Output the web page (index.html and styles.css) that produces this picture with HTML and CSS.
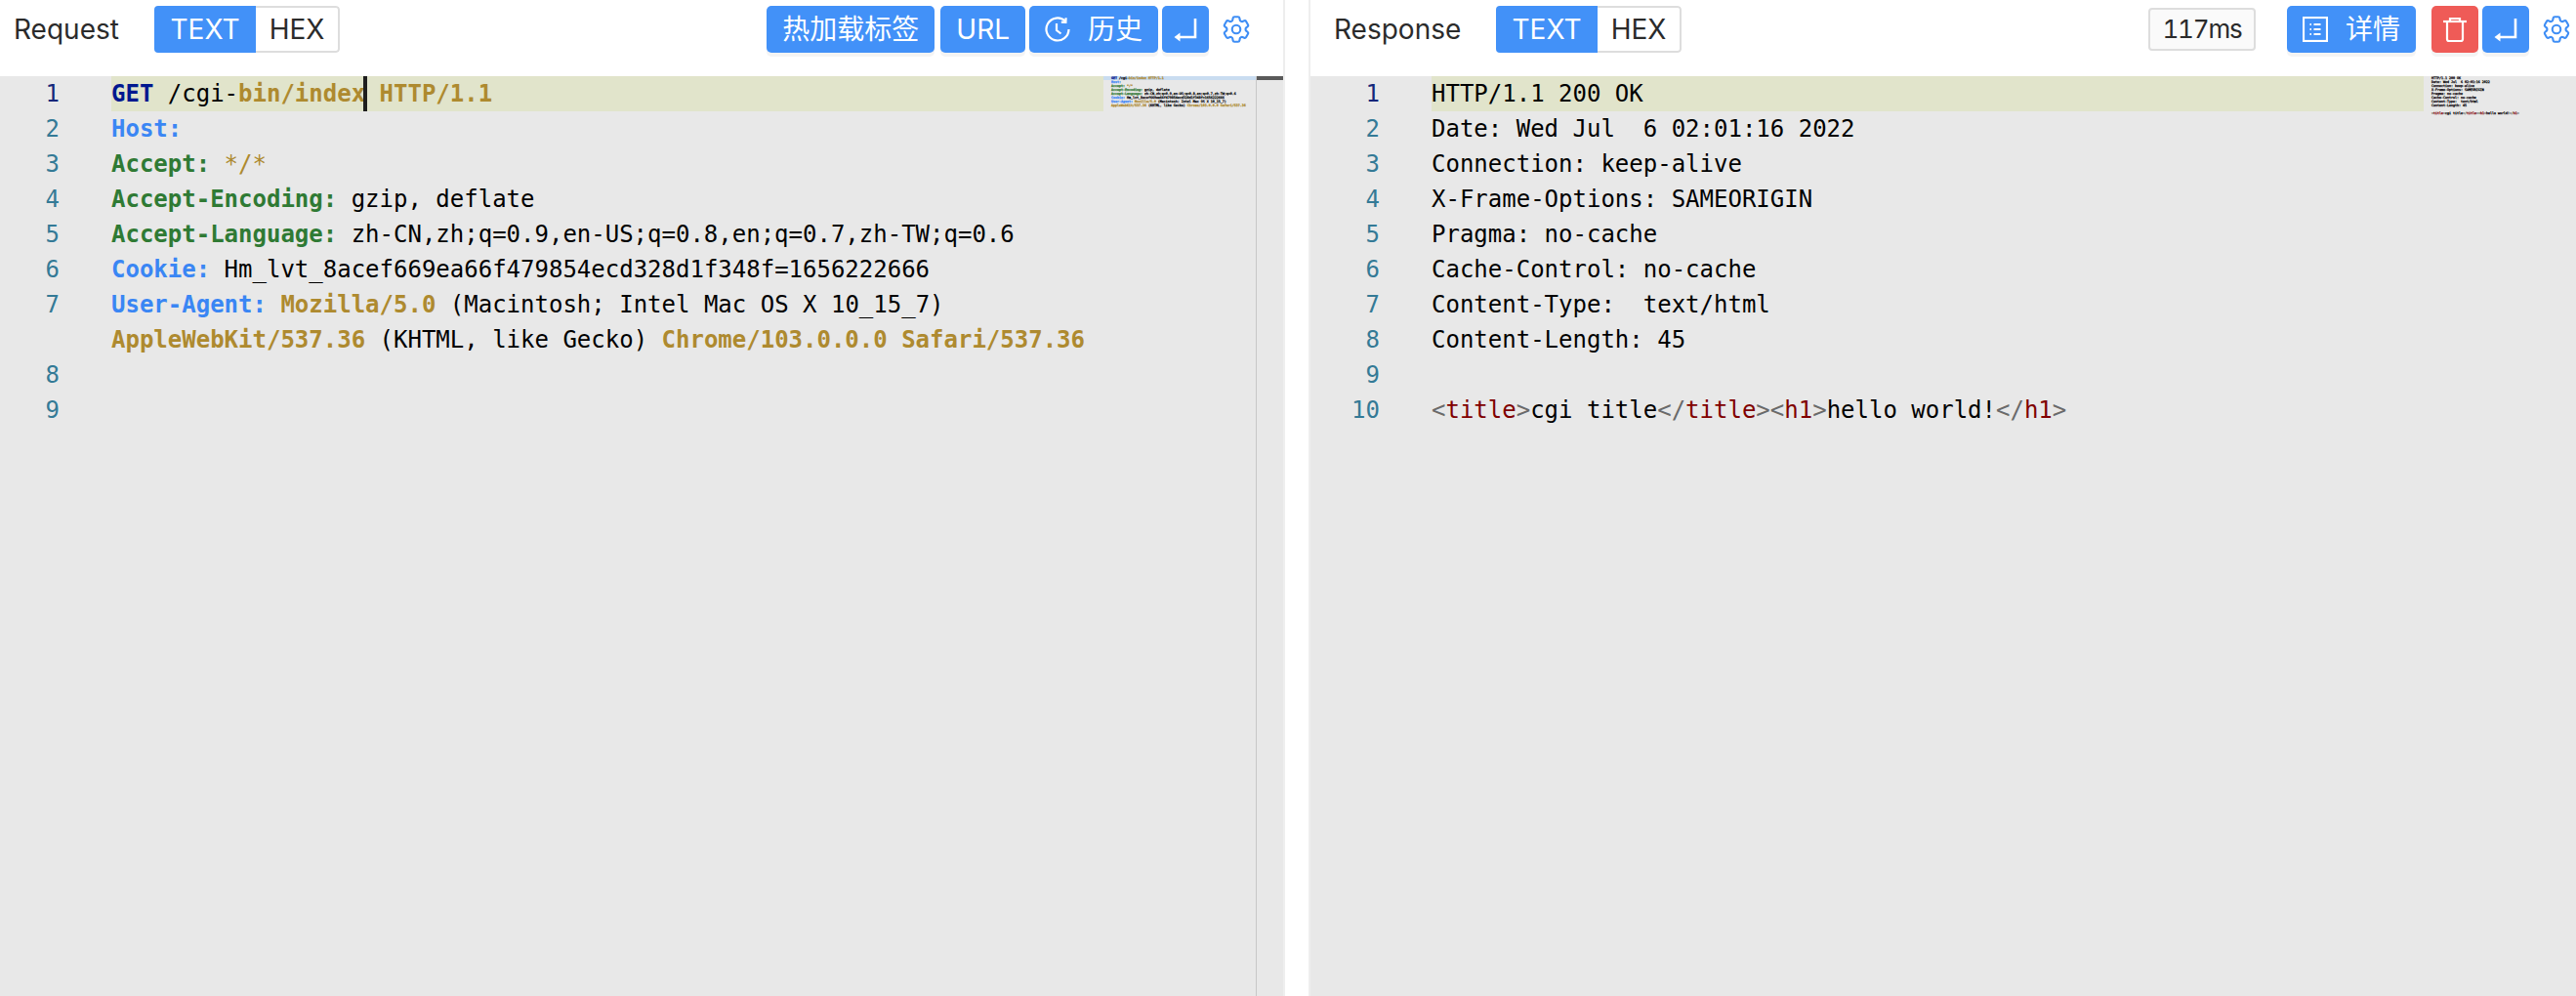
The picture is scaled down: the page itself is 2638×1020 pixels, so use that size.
FILE: index.html
```html
<!DOCTYPE html>
<html lang="en">
<head>
<meta charset="utf-8">
<title>Request / Response</title>
<link rel="stylesheet" href="styles.css">
</head>
<body>
<div class="app">
  <section class="panel panel-req">
    <header class="toolbar">
      <h2 class="title">Request</h2>
      <div class="switch"><span class="seg seg-on">TEXT</span><span class="seg seg-off">HEX</span></div>
      <div class="actions">
        <button class="btn btn-hot">热加载标签</button>
        <button class="btn">URL</button>
        <button class="btn btn-icon-text">
          <svg class="ico" viewBox="0 0 26 26"><path d="M24.500 13A11.500 11.500 0 1 1 21 4.700"/><path d="M16.800 5.600l4.600.2.200-4.600"/><path d="M12 7v7l4.500 3.500"/></svg>
          <span>历史</span>
        </button>
        <button class="btn btn-square">
          <svg class="ico-lg ico-heavy" viewBox="0 0 28 28"><path d="M24 3v19H7"/><path class="solid" d="M2.500 22l6-4.500v9z"/></svg>
        </button>
        <svg class="gear" viewBox="0 0 24 24"><path d="M9.594 3.94c.09-.542.56-.94 1.11-.94h2.593c.55 0 1.02.398 1.11.94l.213 1.281c.063.374.313.686.645.87.074.04.147.083.22.127.325.196.72.257 1.075.124l1.217-.456a1.125 1.125 0 0 1 1.37.49l1.296 2.247a1.125 1.125 0 0 1-.26 1.431l-1.003.827c-.293.241-.438.613-.43.992a7.723 7.723 0 0 1 0 .255c-.008.378.137.75.43.991l1.004.827c.424.35.534.955.26 1.43l-1.298 2.247a1.125 1.125 0 0 1-1.369.491l-1.217-.456c-.355-.133-.75-.072-1.076.124a6.47 6.47 0 0 1-.22.128c-.331.183-.581.495-.644.869l-.213 1.281c-.09.543-.56.94-1.11.94h-2.594c-.55 0-1.019-.398-1.11-.94l-.213-1.281c-.062-.374-.312-.686-.644-.87a6.52 6.52 0 0 1-.22-.127c-.325-.196-.72-.257-1.076-.124l-1.217.456a1.125 1.125 0 0 1-1.369-.49l-1.297-2.247a1.125 1.125 0 0 1 .26-1.431l1.004-.827c.292-.24.437-.613.43-.991a6.932 6.932 0 0 1 0-.255c.007-.38-.138-.751-.43-.992l-1.004-.827a1.125 1.125 0 0 1-.26-1.43l1.297-2.247a1.125 1.125 0 0 1 1.37-.491l1.216.456c.356.133.751.072 1.076-.124.072-.044.146-.086.22-.128.332-.183.582-.495.644-.869l.214-1.28Z"/><path d="M15 12a3 3 0 1 1-6 0 3 3 0 0 1 6 0Z"/></svg>
      </div>
    </header>
    <div class="editor">
      <div class="lines">
        <div class="row"><span class="num num-on">1</span><span class="code code-on"><span class="t-method">GET</span> /cgi-<span class="t-path">bin/index</span><span class="caret"></span> <span class="t-val">HTTP/1.1</span></span></div>
        <div class="row"><span class="num">2</span><span class="code"><span class="t-key">Host:</span></span></div>
        <div class="row"><span class="num">3</span><span class="code"><span class="t-head">Accept:</span> <span class="t-plain">*/*</span></span></div>
        <div class="row"><span class="num">4</span><span class="code"><span class="t-head">Accept-Encoding:</span> gzip, deflate</span></div>
        <div class="row"><span class="num">5</span><span class="code"><span class="t-head">Accept-Language:</span> zh-CN,zh;q=0.9,en-US;q=0.8,en;q=0.7,zh-TW;q=0.6</span></div>
        <div class="row"><span class="num">6</span><span class="code"><span class="t-key">Cookie:</span> Hm_lvt_8acef669ea66f479854ecd328d1f348f=1656222666</span></div>
        <div class="row"><span class="num">7</span><span class="code"><span class="t-key">User-Agent:</span> <span class="t-val">Mozilla/5.0</span> (Macintosh; Intel Mac OS X 10_15_7) <span class="t-val">AppleWebKit/537.36</span> (KHTML, like Gecko) <span class="t-val">Chrome/103.0.0.0</span> <span class="t-val">Safari/537.36</span></span></div>
        <div class="row"><span class="num">8</span><span class="code"></span></div>
        <div class="row"><span class="num">9</span><span class="code"></span></div>
      </div>
      <div class="minimap" aria-hidden="true">
        <div class="mini mini-sel"><span class="t-method">GET</span> /cgi-<span class="t-path">bin/index</span> <span class="t-val">HTTP/1.1</span></div>
        <div class="mini"><span class="t-key">Host:</span></div>
        <div class="mini"><span class="t-head">Accept:</span> <span class="t-plain">*/*</span></div>
        <div class="mini"><span class="t-head">Accept-Encoding:</span> gzip, deflate</div>
        <div class="mini"><span class="t-head">Accept-Language:</span> zh-CN,zh;q=0.9,en-US;q=0.8,en;q=0.7,zh-TW;q=0.6</div>
        <div class="mini"><span class="t-key">Cookie:</span> Hm_lvt_8acef669ea66f479854ecd328d1f348f=1656222666</div>
        <div class="mini"><span class="t-key">User-Agent:</span> <span class="t-val">Mozilla/5.0</span> (Macintosh; Intel Mac OS X 10_15_7) <span class="t-val">AppleWebKit/537.36</span> (KHTML, like Gecko) <span class="t-val">Chrome/103.0.0.0</span> <span class="t-val">Safari/537.36</span></div>
      </div>
      <div class="ruler"><div class="ruler-thumb"></div></div>
    </div>
  </section>

  <div class="divider"></div>

  <section class="panel panel-res">
    <header class="toolbar">
      <h2 class="title">Response</h2>
      <div class="switch"><span class="seg seg-on">TEXT</span><span class="seg seg-off">HEX</span></div>
      <div class="actions">
        <span class="time">117ms</span>
        <button class="btn btn-icon-text btn-detail">
          <svg class="ico" viewBox="0 0 26 26"><rect x="1" y="1" width="24" height="24"/><path d="M7.500 8h1.500M7.500 13h1.500M7.500 18h1.500M11.500 8h7M11.500 13h7M11.500 18h7"/></svg>
          <span>详情</span>
        </button>
        <button class="btn btn-square btn-danger">
          <svg class="ico-lg" viewBox="0 0 28 28"><path d="M2 6h24"/><path d="M9 6V3h10v3"/><path d="M6 6v18a2 2 0 0 0 2 2h12a2 2 0 0 0 2-2V6"/></svg>
        </button>
        <button class="btn btn-square">
          <svg class="ico-lg ico-heavy" viewBox="0 0 28 28"><path d="M24 3v19H7"/><path class="solid" d="M2.500 22l6-4.500v9z"/></svg>
        </button>
        <svg class="gear" viewBox="0 0 24 24"><path d="M9.594 3.94c.09-.542.56-.94 1.11-.94h2.593c.55 0 1.02.398 1.11.94l.213 1.281c.063.374.313.686.645.87.074.04.147.083.22.127.325.196.72.257 1.075.124l1.217-.456a1.125 1.125 0 0 1 1.37.49l1.296 2.247a1.125 1.125 0 0 1-.26 1.431l-1.003.827c-.293.241-.438.613-.43.992a7.723 7.723 0 0 1 0 .255c-.008.378.137.75.43.991l1.004.827c.424.35.534.955.26 1.43l-1.298 2.247a1.125 1.125 0 0 1-1.369.491l-1.217-.456c-.355-.133-.75-.072-1.076.124a6.47 6.47 0 0 1-.22.128c-.331.183-.581.495-.644.869l-.213 1.281c-.09.543-.56.94-1.11.94h-2.594c-.55 0-1.019-.398-1.11-.94l-.213-1.281c-.062-.374-.312-.686-.644-.87a6.52 6.52 0 0 1-.22-.127c-.325-.196-.72-.257-1.076-.124l-1.217.456a1.125 1.125 0 0 1-1.369-.49l-1.297-2.247a1.125 1.125 0 0 1 .26-1.431l1.004-.827c.292-.24.437-.613.43-.991a6.932 6.932 0 0 1 0-.255c.007-.38-.138-.751-.43-.992l-1.004-.827a1.125 1.125 0 0 1-.26-1.43l1.297-2.247a1.125 1.125 0 0 1 1.37-.491l1.216.456c.356.133.751.072 1.076-.124.072-.044.146-.086.22-.128.332-.183.582-.495.644-.869l.214-1.28Z"/><path d="M15 12a3 3 0 1 1-6 0 3 3 0 0 1 6 0Z"/></svg>
      </div>
    </header>
    <div class="editor">
      <div class="lines">
        <div class="row"><span class="num num-on">1</span><span class="code code-on">HTTP/1.1 200 OK</span></div>
        <div class="row"><span class="num">2</span><span class="code">Date: Wed Jul  6 02:01:16 2022</span></div>
        <div class="row"><span class="num">3</span><span class="code">Connection: keep-alive</span></div>
        <div class="row"><span class="num">4</span><span class="code">X-Frame-Options: SAMEORIGIN</span></div>
        <div class="row"><span class="num">5</span><span class="code">Pragma: no-cache</span></div>
        <div class="row"><span class="num">6</span><span class="code">Cache-Control: no-cache</span></div>
        <div class="row"><span class="num">7</span><span class="code">Content-Type:  text/html</span></div>
        <div class="row"><span class="num">8</span><span class="code">Content-Length: 45</span></div>
        <div class="row"><span class="num">9</span><span class="code"></span></div>
        <div class="row"><span class="num">10</span><span class="code"><span class="t-br">&lt;</span><span class="t-tag">title</span><span class="t-br">&gt;</span>cgi title<span class="t-br">&lt;/</span><span class="t-tag">title</span><span class="t-br">&gt;&lt;</span><span class="t-tag">h1</span><span class="t-br">&gt;</span>hello world!<span class="t-br">&lt;/</span><span class="t-tag">h1</span><span class="t-br">&gt;</span></span></div>
      </div>
      <div class="minimap" aria-hidden="true">
        <div class="mini">HTTP/1.1 200 OK</div>
        <div class="mini">Date: Wed Jul  6 02:01:16 2022</div>
        <div class="mini">Connection: keep-alive</div>
        <div class="mini">X-Frame-Options: SAMEORIGIN</div>
        <div class="mini">Pragma: no-cache</div>
        <div class="mini">Cache-Control: no-cache</div>
        <div class="mini">Content-Type:  text/html</div>
        <div class="mini">Content-Length: 45</div>
        <div class="mini mini-blank"></div>
        <div class="mini"><span class="t-br">&lt;</span><span class="t-tag">title</span><span class="t-br">&gt;</span>cgi title<span class="t-br">&lt;/</span><span class="t-tag">title</span><span class="t-br">&gt;&lt;</span><span class="t-tag">h1</span><span class="t-br">&gt;</span>hello world!<span class="t-br">&lt;/</span><span class="t-tag">h1</span><span class="t-br">&gt;</span></div>
      </div>
    </div>
  </section>
</div>
</body>
</html>
```

FILE: styles.css
```css
* { box-sizing: border-box; }
html, body { margin: 0; height: 100%; background: #fff; overflow: hidden; }
body { font-family: Inter, "Noto Sans CJK SC", sans-serif; color: #2b2b2b; }

.app { display: flex; height: 1020px; }
.panel { display: flex; flex-direction: column; min-width: 0; }
.panel-req { width: 1316px; flex: none; border-right: 2px solid #eee; }
.panel-res { flex: 1; border-left: 2px solid #eee; }
.divider { width: 24px; flex: none; }

.toolbar { height: 78px; flex: none; display: flex; align-items: flex-start; padding-top: 6px; }
.panel-req .toolbar { padding-left: 14px; padding-right: 31px; }
.panel-res .toolbar { padding-left: 24px; padding-right: 3px; }
.title { margin: 0; height: 48px; line-height: 48px; font-size: 28px; font-weight: 400; }
.panel-req .title { width: 144px; }
.panel-res .title { width: 166px; }

.switch { display: flex; height: 48px; border-radius: 4px; overflow: hidden; font-size: 28px; line-height: 44px; }
.seg { display: block; }
.seg-on { width: 104px; background: #4291f8; color: #fff; text-align: center; line-height: 48px; }
.seg-off { width: 86px; text-align: center; border: 2px solid #ddd; border-left: 0; border-radius: 0 4px 4px 0; color: #2b2b2b; }

.actions { margin-left: auto; display: flex; align-items: flex-start; gap: 4px; }

.btn {
  height: 48px; border: 0; border-radius: 5px; padding: 0 16px;
  background: #4291f8; color: #fff;
  font-family: inherit; font-size: 28px; font-weight: 400; line-height: 48px;
  box-shadow: 0 4px 0 #f4f4f4;
  display: flex; align-items: center; justify-content: center;
}
.btn-hot { width: 172px; margin-right: 2px; padding: 0; }
.btn-icon-text { width: 132px; padding: 0; gap: 18px; }
.btn-detail { margin-left: 28px; margin-right: 12px; }
.btn-square { width: 48px; padding: 0; }
.btn-danger { background: #ef5b57; }

.ico { width: 26px; height: 26px; flex: none; fill: none; stroke: #fff; stroke-width: 2.2; }
.ico-lg { width: 28px; height: 28px; fill: none; stroke: #fff; stroke-width: 2.2; }
.ico-heavy { stroke-width: 2.6; }
.solid { fill: #fff; stroke: none; }
.gear { width: 34px; height: 34px; margin: 7px 0 0 7px; fill: none; stroke: #3f8ef5; stroke-width: 1.5; flex: none; }

.time {
  width: 110px; height: 44px; margin-top: 2px;
  background: #fafafa; border: 2px solid #ddd; border-radius: 4px;
  font-size: 26px; line-height: 40px; text-align: center; color: #2b2b2b;
  font-feature-settings: "tnum"; letter-spacing: -1.2px;
}

.editor {
  flex: 1; display: flex; min-height: 0; background: #e8e8e8;
  font-family: "DejaVu Sans Mono", monospace; font-size: 24px; line-height: 36px; color: #000;
}
.lines { flex: 1; min-width: 0; }
.row { display: flex; }
.num { flex: none; width: 114px; padding-right: 53px; text-align: right; color: #347a96; }
.panel-res .num { width: 124px; }
.num-on { color: #14267a; }
.code { flex: 1; min-width: 0; min-height: 36px; white-space: pre-wrap; position: relative; }
.code-on { background: #e1e4cb; }
.caret { position: absolute; top: 0; width: 4px; height: 36px; margin-left: -2px; background: #1e1e1e; }

.t-method { color: #00188f; font-weight: 700; }
.t-path { color: #ae8a2f; font-weight: 700; }
.t-val { color: #ae8a2f; font-weight: 700; }
.t-plain { color: #ae8a2f; }
.t-key { color: #3a86f4; font-weight: 700; }
.t-head { color: #2f7a34; font-weight: 700; }
.t-tag { color: #800000; }
.t-br { color: #6a6a6a; }

.minimap { flex: none; width: 156px; font-size: 3.32px; line-height: 4px; overflow: hidden; -webkit-text-stroke: 0.25px; }
.mini { padding-left: 8px; white-space: pre-wrap; }
.mini-sel { background: #c9dcf0; }
.mini-blank { height: 4px; }
.ruler { flex: none; width: 28px; border-left: 1px solid #c8c8c8; }
.ruler-thumb { height: 4px; background: #5a5a5a; }
```
